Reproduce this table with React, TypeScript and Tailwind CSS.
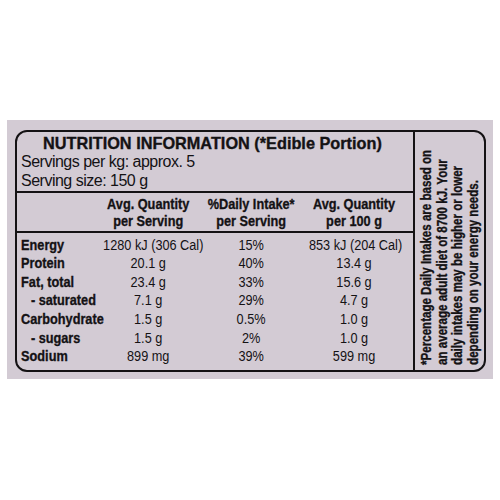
const rows = [
  { name: "Energy", serve: "1280 kJ (306 Cal)", di: "15%", per100: "853 kJ (204 Cal)" },
  { name: "Protein", serve: "20.1 g", di: "40%", per100: "13.4 g" },
  { name: "Fat, total", serve: "23.4 g", di: "33%", per100: "15.6 g" },
  { name: "- saturated", serve: "7.1 g", di: "29%", per100: "4.7 g", sub: true },
  { name: "Carbohydrate", serve: "1.5 g", di: "0.5%", per100: "1.0 g" },
  { name: "- sugars", serve: "1.5 g", di: "2%", per100: "1.0 g", sub: true },
  { name: "Sodium", serve: "899 mg", di: "39%", per100: "599 mg" },
];

// Helvetica Condensed look: Arial metrics squeezed horizontally
const condensed = "w-[484px] origin-left scale-x-[0.82]";
const heavy = "font-bold [-webkit-text-stroke:0.35px_#141214]";

export default function App() {
  return (
    <div className="w-[500px] h-[500px] bg-white pt-[120px] px-[7px] text-[#141214] font-['Liberation_Sans',Arial,sans-serif]">
      <div className="h-[259px] bg-[#d3cbd4] pt-[10px] pl-[8px] pr-[7px]">
        <div className="h-[242px] border-2 border-[#141214] rounded-[12px] flex overflow-hidden">
          {/* main table */}
          <div className="w-[398px] border-r-2 border-[#141214] flex flex-col overflow-hidden">
            <div className={`pt-[1px] pl-[26px] leading-[20px] text-[16.3px] whitespace-nowrap ${heavy}`}>
              NUTRITION INFORMATION (*Edible Portion)
            </div>
            <div className="pl-[4px] pb-[1px] text-[16px] leading-[18.6px] tracking-[-0.5px]">
              <div>Servings per kg: approx. 5</div>
              <div>Serving size: 150 g</div>
            </div>
            <div className="border-y-2 border-[#141214] py-[1.5px]">
              <div
                className={`${condensed} ${heavy} pl-[5px] grid grid-cols-[100px_110px_141px_110px] text-[15.5px] leading-[17.5px] text-center whitespace-nowrap`}
              >
                <div />
                <div>
                  Avg. Quantity
                  <br />
                  per Serving
                </div>
                <div>
                  %Daily Intake*
                  <br />
                  per Serving
                </div>
                <div>
                  Avg. Quantity
                  <br />
                  per 100 g
                </div>
              </div>
            </div>
            <div className={`${condensed} pt-[2.5px] pl-[5px] text-[15.5px] leading-[18.6px]`}>
              {rows.map((r) => (
                <div
                  key={r.name}
                  className="grid grid-cols-[100px_110px_141px_110px] whitespace-nowrap text-center"
                >
                  <div className={`text-left ${heavy} ${r.sub ? "pl-[12px]" : ""}`}>{r.name}</div>
                  <div>{r.serve}</div>
                  <div>{r.di}</div>
                  <div>{r.per100}</div>
                </div>
              ))}
            </div>
          </div>
          {/* footnote */}
          <div className="flex-1 flex items-center justify-center">
            <div
              className={`[writing-mode:vertical-rl] rotate-180 scale-y-[0.825] translate-y-[6px] text-[14px] leading-[15.5px] whitespace-nowrap ${heavy}`}
            >
              *Percentage Daily Intakes are based on
              <br />
              an average adult diet of 8700 kJ. Your
              <br />
              daily intakes may be higher or lower
              <br />
              depending on your energy needs.
            </div>
          </div>
        </div>
      </div>
    </div>
  );
}
